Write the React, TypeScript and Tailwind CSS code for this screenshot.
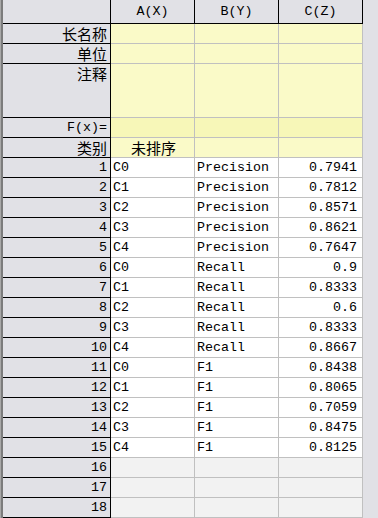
import React from "react";

const mono = { fontFamily: '"Liberation Mono", "Noto Sans CJK SC", monospace' };
const cjk = { fontFamily: '"Noto Sans CJK SC", "Liberation Sans", sans-serif' };

const rows: [string, string, string][] = [
  ["C0", "Precision", "0.7941"],
  ["C1", "Precision", "0.7812"],
  ["C2", "Precision", "0.8571"],
  ["C3", "Precision", "0.8621"],
  ["C4", "Precision", "0.7647"],
  ["C0", "Recall", "0.9"],
  ["C1", "Recall", "0.8333"],
  ["C2", "Recall", "0.6"],
  ["C3", "Recall", "0.8333"],
  ["C4", "Recall", "0.8667"],
  ["C0", "F1", "0.8438"],
  ["C1", "F1", "0.8065"],
  ["C2", "F1", "0.7059"],
  ["C3", "F1", "0.8475"],
  ["C4", "F1", "0.8125"],
];

function MetaRow({ label, h, bg, labelMono, first }: { label: string; h: string; bg: string; labelMono?: boolean; first?: React.ReactNode }) {
  return (
    <div className={`flex ${h}`}>
      <div
        className="w-[108px] shrink-0 border-r border-b border-black bg-[#e1e1e6] pr-[3px] text-right text-[15px] leading-[19px] text-black"
        style={labelMono ? { ...mono, fontSize: "13.33px" } : cjk}
      >
        {label}
      </div>
      {[0, 1, 2].map((i) => (
        <div key={i} className={`w-[84px] shrink-0 border-r border-b border-[#c0c0c0] ${bg}`}>
          {i === 0 ? first : null}
        </div>
      ))}
    </div>
  );
}

export default function App() {
  return (
    <div className="flex h-[518px] w-[378px] overflow-hidden bg-[#e1e1e6]">
      {/* left edge */}
      <div className="w-[3px] shrink-0 border-l border-[#a8a8a8] bg-[#7c7c7c]" />
      <div className="flex w-[360px] shrink-0 flex-col">
        {/* column header */}
        <div className="flex h-[24px] shrink-0">
          <div className="w-[108px] shrink-0 border-r border-b border-black bg-[#e1e1e6]" />
          {["A(X)", "B(Y)", "C(Z)"].map((c) => (
            <div
              key={c}
              className="flex w-[84px] shrink-0 items-center justify-center border-r border-b border-black bg-[#e1e1e6] text-[13.33px] text-black"
              style={mono}
            >
              {c}
            </div>
          ))}
        </div>

        <MetaRow label="长名称" h="h-[20px]" bg="bg-[#fafac8]" />
        <MetaRow label="单位" h="h-[20px]" bg="bg-[#fafac8]" />
        <MetaRow label="注释" h="h-[55px]" bg="bg-[#fafac8]" />
        <MetaRow label="F(x)=" h="h-[20px]" bg="bg-[#f7f7b8]" labelMono />
        <MetaRow
          label="类别"
          h="h-[20px]"
          bg="bg-[#fafac8]"
          first={
            <span className="block pl-[20px] text-[15px] leading-[19px] text-black" style={cjk}>
              未排序
            </span>
          }
        />

        {/* data rows */}
        {rows.map(([a, b, c], i) => (
          <div key={i} className="flex h-[20px] shrink-0 text-[13.33px] leading-[19px] text-black" style={mono}>
            <div className="w-[108px] shrink-0 border-r border-b border-black bg-[#e1e1e6] pr-[3px] text-right">
              {i + 1}
            </div>
            <div className="w-[84px] shrink-0 border-r border-b border-[#c0c0c0] bg-white pl-[2px]">{a}</div>
            <div className="w-[84px] shrink-0 border-r border-b border-[#c0c0c0] bg-white pl-[2px]">{b}</div>
            <div className="w-[84px] shrink-0 border-r border-b border-[#c0c0c0] bg-white pr-[5px] text-right">{c}</div>
          </div>
        ))}

        {/* empty rows */}
        {[16, 17, 18].map((n) => (
          <div key={n} className="flex h-[20px] shrink-0 text-[13.33px] leading-[19px] text-black" style={mono}>
            <div className="w-[108px] shrink-0 border-r border-b border-black bg-[#e1e1e6] pr-[3px] text-right">{n}</div>
            <div className="w-[84px] shrink-0 border-r border-b border-[#c0c0c0] bg-[#f2f2f2]" />
            <div className="w-[84px] shrink-0 border-r border-b border-[#c0c0c0] bg-[#f2f2f2]" />
            <div className="w-[84px] shrink-0 border-r border-b border-[#c0c0c0] bg-[#f2f2f2]" />
          </div>
        ))}
      </div>
    </div>
  );
}
